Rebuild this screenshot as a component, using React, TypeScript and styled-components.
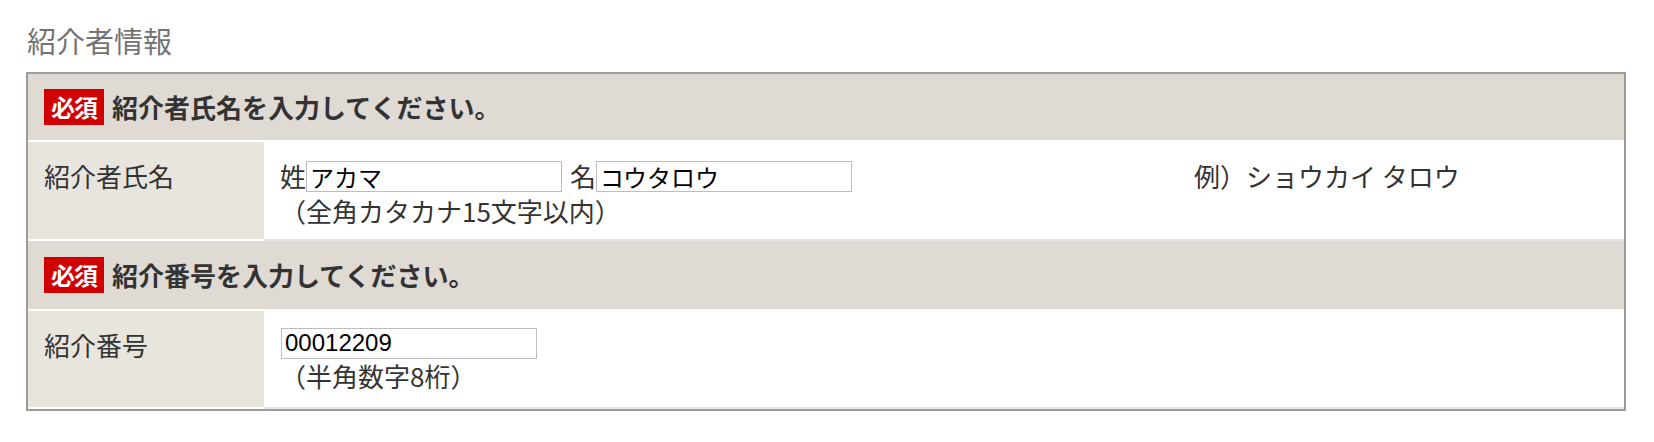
import React from "react";
import styled, { createGlobalStyle } from "styled-components";

const GlobalStyle = createGlobalStyle`
  html, body {
    margin: 0;
    padding: 0;
    background: #ffffff;
  }
  body {
    font-family: "Noto Sans CJK JP", "Noto Sans", sans-serif;
    color: #333333;
  }
  * { box-sizing: border-box; }
`;

const Page = styled.div`
  padding: 20px 0 0 26px;
  width: 1654px;
`;

const Title = styled.h2`
  margin: 0 0 12px 1px;
  font-size: 29px;
  line-height: 40px;
  font-weight: normal;
  color: #747474;
`;

const FormTable = styled.div`
  width: 1600px;
  border: 2px solid #9b9b9b;
  display: flex;
  flex-direction: column;
`;

const HeadRow = styled.div<{ $height: number }>`
  height: ${(p) => p.$height}px;
  background: #dfdad4;
  border-bottom: 2px solid #ffffff;
  display: flex;
  align-items: center;
  gap: 8px;
  padding-left: 16px;
`;

const Badge = styled.span`
  width: 60px;
  height: 36px;
  background: #d00000;
  color: #ffffff;
  font-size: 24px;
  font-weight: bold;
  line-height: 36px;
  text-align: center;
  letter-spacing: -1px;
`;

const Heading = styled.h3`
  margin: 0;
  font-size: 26px;
  line-height: 38px;
  font-weight: bold;
  color: #333333;
`;

const DataRow = styled.div<{ $height: number; $withExample?: boolean }>`
  height: ${(p) => p.$height}px;
  display: grid;
  grid-template-columns: ${(p) => (p.$withExample ? "236px 914px 1fr" : "236px 1fr")};
`;

const LabelCell = styled.div`
  background: #e8e5df;
  border-bottom: 2px solid #ffffff;
  padding: 15px 16px 0;
  font-size: 26px;
  line-height: 38px;
  color: #333333;
`;

const ValueCell = styled.div`
  background: #ffffff;
  border-bottom: 2px solid #e6e6e6;
  padding: 15px 16px 0;
  display: flex;
  flex-direction: column;
  align-items: flex-start;
`;

const ExampleCell = styled(ValueCell)`
  font-size: 26px;
  line-height: 38px;
  color: #333333;
  display: block;
`;

const FieldLine = styled.div<{ $height: number }>`
  height: ${(p) => p.$height}px;
  display: flex;
  align-items: center;
`;

const FieldLabel = styled.span<{ $gap?: number }>`
  font-size: 26px;
  line-height: 38px;
  color: #333333;
  margin-left: ${(p) => p.$gap ?? 0}px;
`;

const TextInput = styled.input<{ $offset?: number }>`
  width: 256px;
  height: 31px;
  margin: 0 0 0 ${(p) => p.$offset ?? 0}px;
  padding: 0 3px;
  border: 1px solid #bdbdbd;
  border-radius: 0;
  background: #ffffff;
  font-family: "Liberation Sans", "Noto Sans CJK JP", sans-serif;
  font-size: 24px;
  line-height: 29px;
  color: #000000;
  outline: none;
`;

const Note = styled.div`
  font-size: 26px;
  line-height: 32px;
  color: #333333;
`;

export default function App() {
  return (
    <>
      <GlobalStyle />
      <Page>
        <Title>紹介者情報</Title>
        <FormTable>
          <HeadRow $height={68}>
            <Badge>必須</Badge>
            <Heading>紹介者氏名を入力してください。</Heading>
          </HeadRow>
          <DataRow $height={99} $withExample>
            <LabelCell>紹介者氏名</LabelCell>
            <ValueCell>
              <FieldLine $height={38}>
                <FieldLabel>姓</FieldLabel>
                <TextInput type="text" defaultValue="アカマ" />
                <FieldLabel $gap={8}>名</FieldLabel>
                <TextInput type="text" defaultValue="コウタロウ" />
              </FieldLine>
              <Note>（全角カタカナ15文字以内）</Note>
            </ValueCell>
            <ExampleCell>例）ショウカイ タロウ</ExampleCell>
          </DataRow>
          <HeadRow $height={70}>
            <Badge>必須</Badge>
            <Heading>紹介番号を入力してください。</Heading>
          </HeadRow>
          <DataRow $height={98}>
            <LabelCell>紹介番号</LabelCell>
            <ValueCell>
              <FieldLine $height={34}>
                <TextInput type="text" defaultValue="00012209" $offset={1} />
              </FieldLine>
              <Note>（半角数字8桁）</Note>
            </ValueCell>
          </DataRow>
        </FormTable>
      </Page>
    </>
  );
}
